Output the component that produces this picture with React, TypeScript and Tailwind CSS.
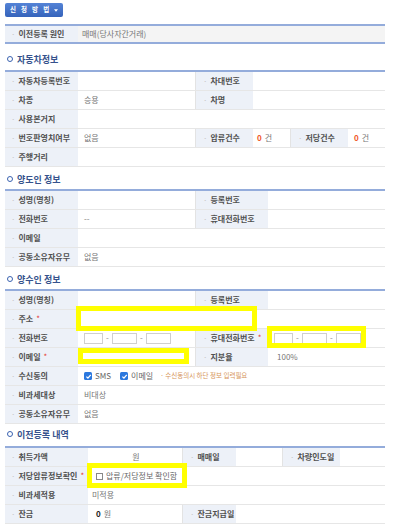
import React from "react";

type LP = { w: string; children?: React.ReactNode; req?: boolean; sep?: boolean };

function L({ w, children, req, sep }: LP) {
  return (
    <div
      className={`${w} ${sep ? "border-l border-[#e3e3e3] pl-[7px]" : "pl-[6px]"} h-full shrink-0 bg-[#edf1f8] flex items-center text-[8px] font-bold text-[#505050] whitespace-nowrap overflow-hidden`}
    >
      <span className="text-[#c4c4c4] font-normal mr-[3px]">·</span>
      {children}
      {req && <span className="text-[#e53935] ml-[3px] font-normal">*</span>}
    </div>
  );
}

function V({ w, children, cls }: { w: string; children?: React.ReactNode; cls?: string }) {
  return (
    <div className={`${w} ${cls ?? "pl-[6px]"} h-full flex items-center text-[8px] text-[#777] whitespace-nowrap overflow-hidden`}>
      {children}
    </div>
  );
}

function Row({ children, rel }: { children: React.ReactNode; rel?: boolean }) {
  return (
    <div className={`${rel ? "relative" : ""} flex h-[19px] border-b border-[#e6e6e6]`}>{children}</div>
  );
}

function Title({ children, cls }: { children: React.ReactNode; cls: string }) {
  return (
    <div className={`${cls} flex items-center h-[12px] ml-[2px] gap-[4px]`}>
      <span className="w-[6px] h-[6px] rounded-full border-[1.5px] border-[#3a62b0]"></span>
      <span className="text-[9px] font-bold text-[#36528c] leading-none">{children}</span>
    </div>
  );
}

function Input({ w }: { w: string }) {
  return <span className={`${w} h-[11px] bg-white border border-[#cfcfcf]`}></span>;
}

function Dash() {
  return <span className="w-[9px] text-center text-[8px] text-[#888]">-</span>;
}

function Checked() {
  return (
    <span className="w-[8px] h-[8px] rounded-[1.5px] bg-[#2b78de] flex items-center justify-center">
      <svg viewBox="0 0 10 10" className="w-[7px] h-[7px]">
        <path d="M2 5.2 L4.2 7.4 L8.2 2.6" stroke="white" strokeWidth="1.8" fill="none" />
      </svg>
    </span>
  );
}

function Yellow({ cls }: { cls: string }) {
  return <div className={`${cls} absolute z-10 border-[5px] border-[#ffff00]`}></div>;
}

function Zero() {
  return (
    <>
      <span className="text-[#f0582a] font-bold">0</span>
      <span className="ml-[3px]">건</span>
    </>
  );
}

export default function App() {
  return (
    <div className="w-[400px] h-[525px] bg-white overflow-hidden font-['Noto_Sans_CJK_KR','Noto_Sans',sans-serif]">
      <div className="ml-[5px] w-[380px] pt-[3px]">
        {/* button */}
        <div className="w-[58px] h-[14px] rounded-[2px] bg-gradient-to-b from-[#5483d6] to-[#3563bb] flex items-center pl-[5px] text-white text-[6.5px] font-bold tracking-[1.8px]">
          <span>신 청 방 법</span>
          <svg viewBox="0 0 6 4" className="w-[4px] h-[3px] ml-[3px]">
            <path d="M0 0 L6 0 L3 4 Z" fill="white" />
          </svg>
        </div>

        {/* table 1 */}
        <div className="mt-[7px] flex h-[20px] border-y-2 border-[#94acdb]">
          <L w="w-[73px]">이전등록 원인</L>
          <V w="flex-1" cls="pl-[4px] bg-[#f4f4f4]">매매(당사자간거래)</V>
        </div>

        <Title cls="mt-[9px] mb-[5px]">자동차정보</Title>
        <div className="border-t-2 border-[#94acdb]">
          <Row>
            <L w="w-[73px]">자동차등록번호</L>
            <V w="w-[117px]" />
            <L w="w-[58px]" sep>차대번호</L>
            <V w="flex-1" />
          </Row>
          <Row>
            <L w="w-[73px]">차종</L>
            <V w="w-[117px]">승용</V>
            <L w="w-[58px]" sep>차명</L>
            <V w="flex-1" />
          </Row>
          <Row>
            <L w="w-[73px]">사용본거지</L>
            <V w="flex-1" />
          </Row>
          <Row>
            <L w="w-[73px]">번호판영치여부</L>
            <V w="w-[117px]">없음</V>
            <L w="w-[58px]" sep>압류건수</L>
            <V w="w-[37px]" cls="pl-[4px]"><Zero /></V>
            <L w="w-[58px]" sep>저당건수</L>
            <V w="flex-1"><Zero /></V>
          </Row>
          <Row>
            <L w="w-[73px]">주행거리</L>
            <V w="flex-1" />
          </Row>
        </div>

        <Title cls="mt-[6px] mb-[4px]">양도인 정보</Title>
        <div className="border-t-2 border-[#94acdb]">
          <Row>
            <L w="w-[73px]">성명(명칭)</L>
            <V w="w-[117px]" />
            <L w="w-[73px]" sep>등록번호</L>
            <V w="flex-1" />
          </Row>
          <Row>
            <L w="w-[73px]">전화번호</L>
            <V w="w-[117px]">--</V>
            <L w="w-[73px]" sep>휴대전화번호</L>
            <V w="flex-1" />
          </Row>
          <Row>
            <L w="w-[73px]">이메일</L>
            <V w="flex-1" />
          </Row>
          <Row>
            <L w="w-[73px]">공동소유자유무</L>
            <V w="flex-1">없음</V>
          </Row>
        </div>

        <Title cls="mt-[6px] mb-[4px]">양수인 정보</Title>
        <div className="border-t-2 border-[#94acdb]">
          <Row>
            <L w="w-[73px]">성명(명칭)</L>
            <V w="w-[117px]" />
            <L w="w-[73px]" sep>등록번호</L>
            <V w="flex-1" />
          </Row>
          <Row rel>
            <L w="w-[73px]" req>주소</L>
            <V w="flex-1" />
            <Yellow cls="left-[71px] top-[-4px] w-[181px] h-[25px]" />
          </Row>
          <Row rel>
            <L w="w-[73px]">전화번호</L>
            <V w="w-[117px]">
              <Input w="w-[19px]" />
              <Dash />
              <Input w="w-[25px]" />
              <Dash />
              <Input w="w-[25px]" />
            </V>
            <L w="w-[73px]" sep req>휴대전화번호</L>
            <V w="flex-1">
              <Input w="w-[19px]" />
              <Dash />
              <Input w="w-[25px]" />
              <Dash />
              <Input w="w-[25px]" />
            </V>
            <Yellow cls="left-[262px] top-[-3px] w-[99px] h-[22px]" />
          </Row>
          <Row rel>
            <L w="w-[73px]" req>이메일</L>
            <V w="w-[117px]" />
            <L w="w-[73px]" sep>지분율</L>
            <V w="flex-1" cls="pl-[9px]">100%</V>
            <Yellow cls="left-[73px] top-[0px] w-[111px] h-[16px]" />
          </Row>
          <Row>
            <L w="w-[73px]">수신동의</L>
            <V w="flex-1">
              <Checked />
              <span className="ml-[3px] text-[#666]">SMS</span>
              <span className="ml-[9px]"></span>
              <Checked />
              <span className="ml-[3px] text-[#666]">이메일</span>
              <span className="ml-[7px] text-[6.5px] text-[#d6955a]">· 수신동의시 하단 정보 입력필요</span>
            </V>
          </Row>
          <Row>
            <L w="w-[73px]">비과세대상</L>
            <V w="flex-1">비대상</V>
          </Row>
          <Row>
            <L w="w-[73px]">공동소유자유무</L>
            <V w="flex-1">없음</V>
          </Row>
        </div>

        <Title cls="mt-[4px] mb-[6px]">이전등록 내역</Title>
        <div className="border-t-2 border-[#94acdb]">
          <Row>
            <L w="w-[83px]">취득가액</L>
            <V w="w-[94px]" cls="justify-center pl-[2px]">원</V>
            <L w="w-[54px]" sep>매매일</L>
            <V w="w-[46px]" />
            <L w="w-[58px]" sep>차량인도일</L>
            <V w="flex-1" />
          </Row>
          <Row rel>
            <L w="w-[83px]" req>저당압류정보확인</L>
            <V w="flex-1" cls="pl-[8px]">
              <span className="w-[7px] h-[7px] border border-[#888] bg-white"></span>
              <span className="ml-[3px] text-[#666]">압류/저당정보 확인함</span>
            </V>
            <Yellow cls="left-[82px] top-[-4px] w-[100px] h-[25px]" />
          </Row>
          <Row>
            <L w="w-[83px]">비과세적용</L>
            <V w="flex-1" cls="pl-[4px]">미적용</V>
          </Row>
          <Row>
            <L w="w-[83px]">잔금</L>
            <V w="w-[94px]" cls="pl-[8px]">
              <span className="text-[#222] font-bold">0</span>
              <span className="ml-[3px]">원</span>
            </V>
            <L w="w-[54px]" sep>잔금지급일</L>
            <V w="flex-1" />
          </Row>
        </div>
      </div>
    </div>
  );
}
